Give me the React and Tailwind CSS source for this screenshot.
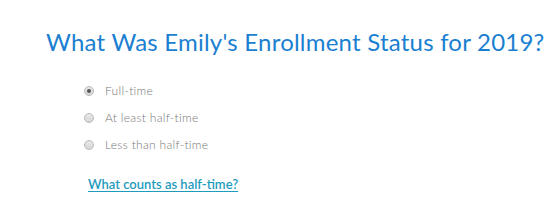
export default function App() {
  const opts = [
    { label: "Full-time", checked: true },
    { label: "At least half-time" },
    { label: "Less than half-time" },
  ];
  return (
    <div className="w-[556px] h-[201px] bg-white overflow-hidden" style={{ fontFamily: "Lato, 'Noto Sans', sans-serif" }}>
      <h1 className="pl-[46px] pt-[27px] text-[24px] leading-[30px] font-normal text-[#1b7fd1] whitespace-nowrap tracking-[0.22px]">
        What Was Emily's Enrollment Status for 2019?
      </h1>
      <div className="pl-[84px] pt-[25px] flex flex-col gap-[9px]">
        {opts.map((o) => (
          <div key={o.label} className="flex items-center h-[18px]">
            <span className="w-[10px] h-[10px] rounded-full border border-[#b9b9b9] bg-gradient-to-b from-[#e8e8e8] to-[#d6d6d6] flex items-center justify-center">
              {o.checked && <span className="w-[4px] h-[4px] rounded-full bg-[#555]" />}
            </span>
            <span className="ml-[11px] text-[12px] font-light text-[#777777] tracking-[0.3px]">{o.label}</span>
          </div>
        ))}
      </div>
      <div className="pl-[88px] pt-[17px]">
        <a href="#" className="text-[13px] font-semibold text-[#1f9bbd] underline underline-offset-[2px]">What counts as half-time?</a>
      </div>
    </div>
  );
}
